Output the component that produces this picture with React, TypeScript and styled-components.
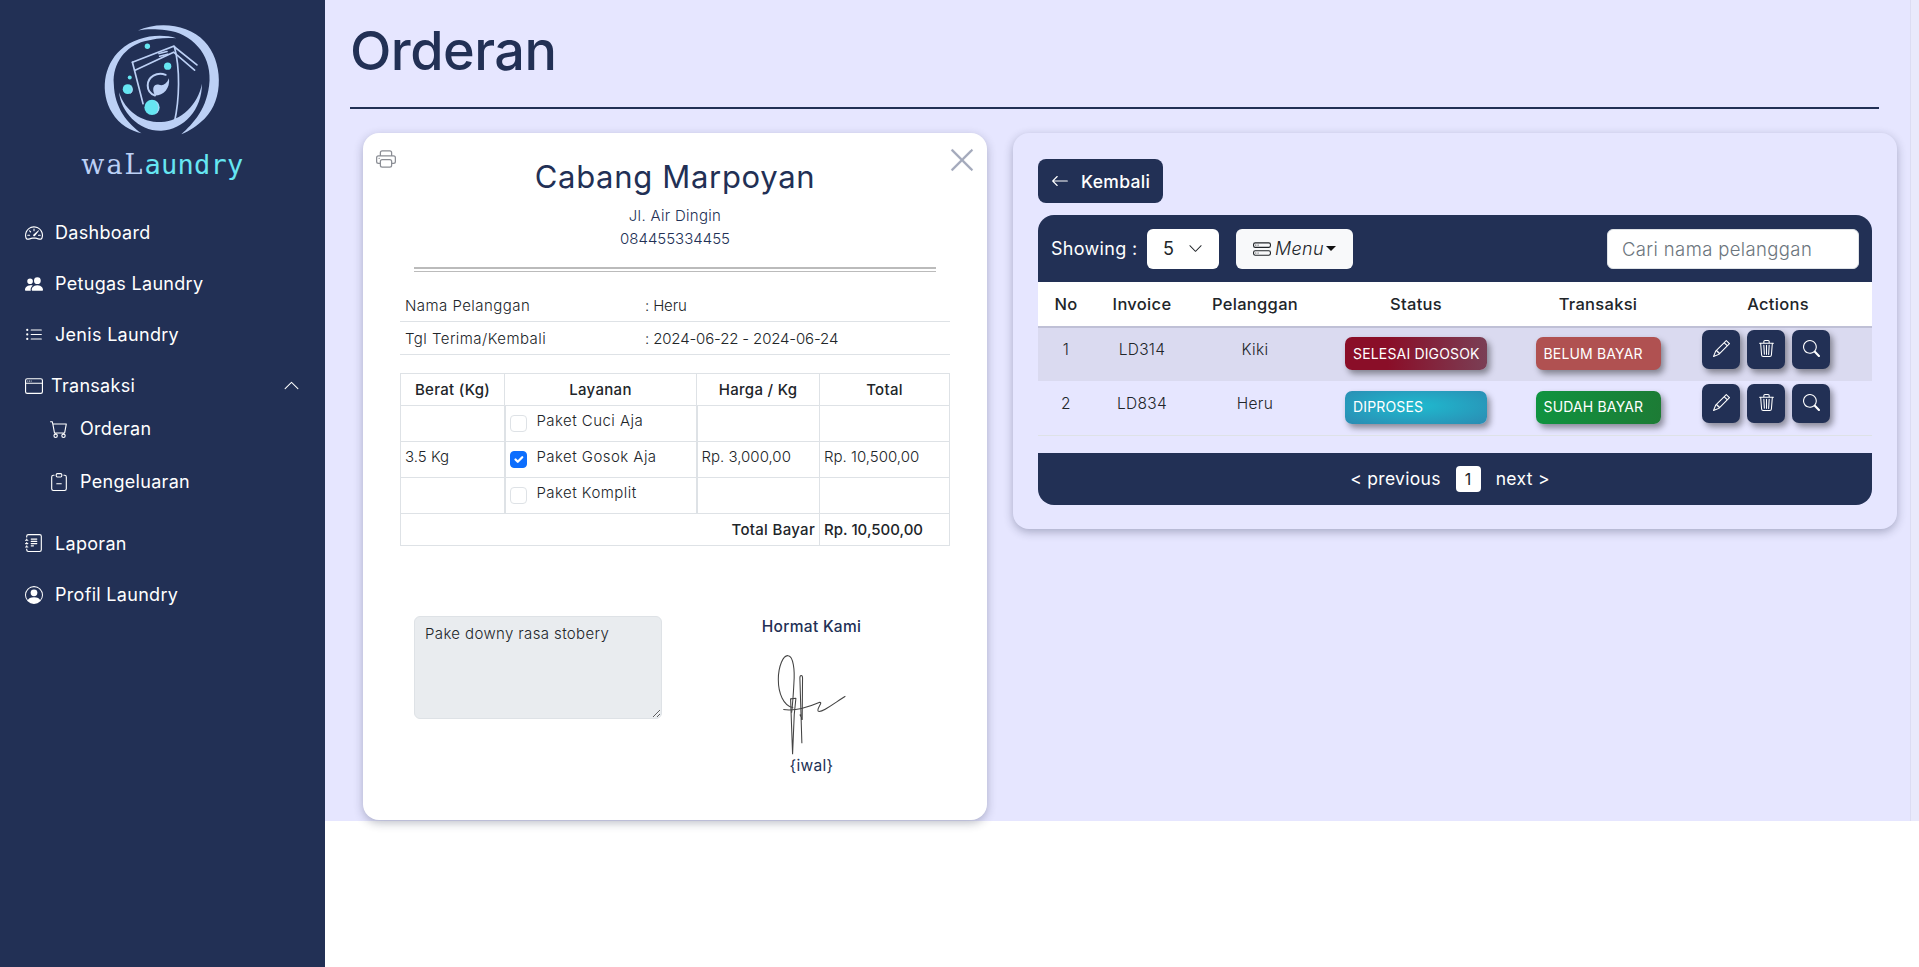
import React from "react";
import styled, { createGlobalStyle } from "styled-components";
import {
  BsArrowLeft,
  BsCart,
  BsChevronDown,
  BsChevronUp,
  BsClipboardMinus,
  BsHddStack,
  BsJournalText,
  BsListUl,
  BsPencil,
  BsPeopleFill,
  BsPersonCircle,
  BsPrinter,
  BsSearch,
  BsSpeedometer2,
  BsTrash3,
  BsWindow,
  BsXLg,
} from "react-icons/bs";

const navy = "#223055";

const GlobalStyle = createGlobalStyle`
  * { box-sizing: border-box; }
  html, body { margin: 0; padding: 0; height: 100%; overflow: hidden; background: #fff; }
  body {
    font-family: "Inter", "Noto Sans", sans-serif;
    font-size: 15px;
    letter-spacing: 0.02em;
    color: #212529;
  }
`;

const Page = styled.div`
  display: flex;
  height: 967px;
`;

const Sidebar = styled.aside`
  width: 325px;
  flex: none;
  background: ${navy};
  color: #fff;
`;

const Brand = styled.div`
  display: flex;
  flex-direction: column;
  align-items: center;
  padding-top: 9px;
  height: 207px;
`;

const BrandName = styled.div`
  margin-top: 5px;
  font-family: "DejaVu Sans Mono", monospace;
  font-size: 27px;
  line-height: 36px;
  letter-spacing: 0.01em;
  color: #66e6f2;
`;

const BrandPrefix = styled.span`
  font-family: "DejaVu Serif", serif;
  font-size: 27px;
  letter-spacing: 2px;
  color: #bcd0f5;
`;

const NavList = styled.nav`
  display: flex;
  flex-direction: column;
`;

const NavItem = styled.div<{ $sub?: boolean; $gap?: number; $height?: number }>`
  display: flex;
  align-items: center;
  gap: ${(p) => p.$gap ?? 12}px;
  height: ${(p) => p.$height ?? 51}px;
  padding-left: ${(p) => (p.$sub ? 50 : 25)}px;
  padding-right: 25px;
  font-size: 18px;
  white-space: nowrap;

  svg {
    flex: none;
    font-size: 18px;
  }
`;

const NavChevron = styled.span`
  margin-left: auto;
  display: flex;
  svg { font-size: 17px; }
`;

const Main = styled.main`
  flex: 1;
  height: 821px;
  background: #e6e6ff;
  display: flex;
  min-width: 0;
`;

const Content = styled.div`
  flex: 1;
  min-width: 0;
`;

const ScrollTrack = styled.div`
  width: 9px;
  flex: none;
  background: #e9e9fb;
  border-left: 1px solid #dcdcf2;
`;

const PageHeader = styled.header`
  margin: 0 31px 0 25px;
  height: 109px;
  border-bottom: 2px solid ${navy};
  display: flex;
  align-items: flex-start;
`;

const PageTitle = styled.h1`
  margin: 17px 0 0;
  font-size: 54px;
  line-height: 68px;
  font-weight: 500;
  letter-spacing: -0.01em;
  color: ${navy};
`;

const Columns = styled.div`
  display: flex;
  align-items: flex-start;
  gap: 26px;
  margin: 24px 0 0 38px;
`;

const ReceiptCard = styled.section`
  position: relative;
  width: 624px;
  height: 687px;
  flex: none;
  padding: 25px 37px 0;
  background: #fff;
  border-radius: 16px;
  box-shadow: 0 3px 10px rgba(34, 40, 70, 0.3);
  color: ${navy};
`;

const PrintButton = styled.span`
  position: absolute;
  left: 13px;
  top: 16px;
  display: flex;
  color: #8a8d94;
  font-size: 20px;
`;

const CloseButton = styled.span`
  position: absolute;
  right: 11px;
  top: 13px;
  display: flex;
  color: #a3a9bb;
  font-size: 28px;

  svg { stroke: currentColor; stroke-width: 0.5; }
`;

const ReceiptHead = styled.div`
  text-align: center;
`;

const BranchName = styled.h2`
  margin: 0 0 8px;
  font-size: 31px;
  line-height: 38px;
  font-weight: 400;
  letter-spacing: 0.022em;
`;

const BranchLine = styled.div<{ $numeric?: boolean }>`
  font-size: 15px;
  line-height: 23px;
  font-weight: 300;
  letter-spacing: ${(p) => (p.$numeric ? "0" : "0.02em")};
`;

const DoubleRule = styled.div`
  margin: 17px 14px 17px;
  height: 5px;
  border-top: 2px solid #bbb;
  border-bottom: 1px solid #bbb;
`;

const InfoRow = styled.div`
  display: grid;
  grid-template-columns: 240px 1fr;
  height: 33px;
  align-items: center;
  padding-left: 5px;
  border-bottom: 1px solid #dee2e6;
  font-size: 15px;
  font-weight: 300;
  letter-spacing: 0.03em;
  color: #212529;
`;

const InfoValue = styled.span`
  letter-spacing: -0.01em;
`;

const ServiceTable = styled.table`
  width: 549px;
  margin-top: 18px;
  border-collapse: collapse;
  table-layout: fixed;
  color: #212529;
`;

const HeadCell = styled.th<{ $w: number }>`
  width: ${(p) => p.$w}px;
  height: 32px;
  padding: 4px;
  border: 1px solid #dee2e6;
  font-size: 15px;
  line-height: 23px;
  font-weight: 500;
  text-align: center;
`;

const BodyCell = styled.td<{ $service?: boolean }>`
  height: 36px;
  padding: 3px 4px;
  border: 1px solid #dee2e6;
  ${(p) => (p.$service ? "border-left-width: 2px; border-right-width: 2px;" : "letter-spacing: 0;")}
  font-size: 15px;
  line-height: 24px;
  font-weight: 300;
  vertical-align: top;
`;

const TotalLabel = styled.td`
  height: 32px;
  padding: 3px 4px;
  border: 1px solid #dee2e6;
  font-size: 15px;
  line-height: 24px;
  font-weight: 500;
  text-align: right;
`;

const TotalValue = styled(TotalLabel)`
  text-align: left;
  letter-spacing: 0;
`;

const CheckLine = styled.label`
  display: flex;
  align-items: flex-start;
  gap: 10px;
  letter-spacing: 0.03em;
`;

const Check = styled.input`
  appearance: none;
  width: 17px;
  height: 17px;
  margin: 6px 0 0 0;
  flex: none;
  background: #fff;
  border: 1px solid #dee2e6;
  border-radius: 4px;

  &:checked {
    background: #0d6efd url("data:image/svg+xml,%3csvg xmlns='http://www.w3.org/2000/svg' viewBox='0 0 20 20'%3e%3cpath fill='none' stroke='%23fff' stroke-linecap='round' stroke-linejoin='round' stroke-width='3' d='m6 10 3 3 6-6'/%3e%3c/svg%3e") center / 100% no-repeat;
    border-color: #0d6efd;
  }
`;

const SignRow = styled.div`
  display: grid;
  grid-template-columns: 248px 1fr;
  column-gap: 11px;
  margin: 70px 0 0 14px;
`;

const NoteBox = styled.textarea`
  width: 248px;
  height: 103px;
  padding: 6px 10px;
  background: #e9ecef;
  border: 1px solid #dee2e6;
  border-radius: 6px;
  font: inherit;
  font-size: 15px;
  line-height: 22px;
  font-weight: 300;
  letter-spacing: 0.025em;
  color: #212529;
  outline: none;
`;

const SignColumn = styled.div`
  display: flex;
  flex-direction: column;
  align-items: center;
  padding-top: 1px;
  font-size: 15.5px;
  font-weight: 500;
  color: ${navy};
`;

const SignTitle = styled.div`
  line-height: 20px;
`;

const SignName = styled.div`
  line-height: 20px;
  font-weight: 400;
`;

const SignatureArt = styled.svg`
  width: 73px;
  height: 103px;
  margin: 16px 0 0;
`;

const ListCard = styled.section`
  width: 884px;
  flex: none;
  padding: 26px 25px 24px;
  background: #e6e6ff;
  border-radius: 16px;
  box-shadow: 0 3px 10px rgba(34, 40, 70, 0.32);
`;

const BackButton = styled.button`
  display: inline-flex;
  align-items: center;
  gap: 12px;
  height: 44px;
  padding: 0 13px;
  margin-bottom: 12px;
  background: ${navy};
  border: none;
  border-radius: 8px;
  color: #fff;
  font: inherit;
  font-size: 17.5px;
  font-weight: 500;
  letter-spacing: 0.02em;

  svg { font-size: 18px; }
`;

const Toolbar = styled.div`
  display: flex;
  align-items: center;
  height: 67px;
  padding: 0 13px;
  background: ${navy};
  border-radius: 16px 16px 0 0;
  color: #fff;
  font-size: 18px;
`;

const ShowingLabel = styled.span`
  width: 96px;
`;

const SelectBox = styled.div`
  width: 72px;
  height: 40px;
  display: flex;
  align-items: center;
  justify-content: space-between;
  padding: 0 16px;
  background: #fff;
  border-radius: 6px;
  color: #212529;
  font-size: 18px;
  svg { font-size: 15px; }
`;

const MenuButton = styled.div`
  width: 117px;
  height: 40px;
  margin-left: 17px;
  display: flex;
  align-items: center;
  justify-content: center;
  gap: 4px;
  background: #f8f9fa;
  border-radius: 6px;
  color: #212529;
  font-size: 18px;
  font-style: italic;
  font-weight: 300;

  svg { font-size: 18px; }

  &::after {
    content: "";
    margin-left: -2px;
    border-top: 5px solid #111;
    border-left: 5px solid transparent;
    border-right: 5px solid transparent;
  }
`;

const SearchInput = styled.input`
  width: 252px;
  height: 40px;
  margin-left: auto;
  padding: 0 14px;
  background: #fff;
  border: 1px solid #dee2e6;
  border-radius: 6px;
  font: inherit;
  font-size: 18.5px;
  font-weight: 300;
  letter-spacing: 0.02em;
  outline: none;

  &::placeholder { color: #6c757d; opacity: 1; }
`;

const OrderTable = styled.table`
  width: 834px;
  border-collapse: collapse;
  table-layout: fixed;
`;

const OrderHead = styled.th<{ $w: number }>`
  width: ${(p) => p.$w}px;
  height: 45px;
  padding: 0;
  background: #fff;
  border-bottom: 2px solid #bfc0d6;
  font-size: 16.5px;
  font-weight: 500;
  text-align: center;
  color: #212529;
`;

const OrderRow = styled.tr<{ $striped?: boolean }>`
  height: 54px;
  background: ${(p) => (p.$striped ? "#dadaf0" : "transparent")};
  border-bottom: 1px solid ${(p) => (p.$striped ? "transparent" : "#dee2e6")};
`;

const OrderCell = styled.td`
  padding: 10px 0 0;
  vertical-align: top;
  text-align: center;
  font-size: 15.5px;
  line-height: 24px;
  font-weight: 300;
  color: #212529;
`;

const chipBackgrounds = {
  done: "linear-gradient(90deg, #8a0e28 30%, #7a3f55)",
  process: "radial-gradient(ellipse at 50% 45%, #1fbacf, #2b8bb2)",
  unpaid: "#b05151",
  paid: "linear-gradient(100deg, #0f9440, #1d7b35)",
};

const Chip = styled.div<{ $kind: keyof typeof chipBackgrounds; $w: number }>`
  width: ${(p) => p.$w}px;
  height: 33px;
  margin: -1px auto 0;
  padding-left: 8px;
  display: flex;
  align-items: center;
  border-radius: 7px;
  background: ${(p) => chipBackgrounds[p.$kind]};
  box-shadow: 3px 4px 6px rgba(0, 0, 0, 0.4);
  color: #fff;
  font-size: 14px;
  font-weight: 400;
  letter-spacing: 0.012em;
  white-space: nowrap;
`;

const ActionCell = styled.td`
  padding: 2px 0 0 18px;
  vertical-align: top;
`;

const ActionGroup = styled.div`
  display: flex;
  gap: 7px;
`;

const ActionButton = styled.button`
  width: 38px;
  height: 39px;
  padding: 0 0 2px;
  display: flex;
  align-items: center;
  justify-content: center;
  background: ${navy};
  border: none;
  border-radius: 7px;
  box-shadow: 3px 4px 6px rgba(0, 0, 0, 0.4);
  color: #fff;
  font-size: 17px;
`;

const Pager = styled.div`
  display: flex;
  align-items: center;
  justify-content: center;
  gap: 15px;
  height: 52px;
  margin-top: 17px;
  padding-right: 10px;
  background: ${navy};
  border-radius: 0 0 16px 16px;
  color: #fff;
  font-size: 17.5px;
  font-weight: 400;
`;

const PageNumber = styled.span`
  width: 25px;
  height: 26px;
  display: flex;
  align-items: center;
  justify-content: center;
  background: #fff;
  border-radius: 4px;
  color: #212529;
  font-size: 16px;
`;

const NAV_TOP = [
  { label: "Dashboard", icon: <BsSpeedometer2 /> },
  { label: "Petugas Laundry", icon: <BsPeopleFill /> },
  { label: "Jenis Laundry", icon: <BsListUl /> },
];

const SERVICES = [
  { name: "Paket Cuci Aja", checked: false },
  { name: "Paket Gosok Aja", checked: true, weight: "3.5 Kg", price: "Rp. 3,000,00", total: "Rp. 10,500,00" },
  { name: "Paket Komplit", checked: false },
];

const ORDERS = [
  {
    no: 1,
    invoice: "LD314",
    customer: "Kiki",
    status: "SELESAI DIGOSOK",
    statusKind: "done" as const,
    payment: "BELUM BAYAR",
    paymentKind: "unpaid" as const,
  },
  {
    no: 2,
    invoice: "LD834",
    customer: "Heru",
    status: "DIPROSES",
    statusKind: "process" as const,
    payment: "SUDAH BAYAR",
    paymentKind: "paid" as const,
  },
];

function LaundryLogo() {
  return (
    <svg width="170" height="133" viewBox="-5 0 510 400" aria-hidden="true">
      <g fill="#bcd0f5">
        <path d="M175 65C230 38 325 42 375 98C430 155 435 272 375 330C352 352 330 366 305 377C340 345 385 300 390 215C394 135 335 72 260 64C225 60 200 60 175 65Z" />
        <path d="M290 88C240 72 168 82 122 123C70 170 60 252 97 312C118 348 155 367 185 374C145 345 104 300 102 225C98 162 138 112 194 97C227 88 260 85 290 88Z" />
        <path d="M118 250C122 308 178 368 245 366C312 364 368 302 367 225C356 286 305 338 245 340C187 341 136 308 118 250Z" />
        <path d="M226 260C252 260 272 238 268 208C260 226 250 232 238 228C224 224 214 238 226 260Z" />
      </g>
      <g fill="none" stroke="#bcd0f5" strokeLinecap="round">
        <g strokeWidth="5">
          <path d="M158 160L282 112L352 168" />
          <path d="M166 184L282 130L345 184" />
          <path d="M158 160L190 285" />
          <path d="M284 112C302 180 300 270 284 342" />
          <path d="M238 134L262 128M240 142L264 136" />
        </g>
        <path d="M258 198C232 188 204 204 204 230C204 246 214 256 226 260" strokeWidth="6" />
      </g>
      <g fill="#66e6f2">
        <circle cx="203" cy="112" r="8" />
        <circle cx="264" cy="172" r="11" />
        <circle cx="150" cy="206" r="6" />
        <circle cx="144" cy="241" r="15" />
        <circle cx="217" cy="296" r="23" />
      </g>
      <g fill="none" stroke="#bcd0f5" strokeWidth="3">
        <path d="M152 232C160 240 158 250 152 254" />
        <path d="M228 278C240 288 238 306 230 314" />
      </g>
    </svg>
  );
}

function Signature() {
  return (
    <SignatureArt viewBox="75 40 220 310" aria-hidden="true">
      <g fill="none" stroke="#444" strokeWidth="3.2" strokeLinejoin="round">
        <path d="M130 205C100 200 85 160 85 120C85 80 100 45 115 48C130 50 135 90 132 130C130 170 128 195 125 220" />
        <path d="M128 345L122 178L138 176L133 225L128 345" />
        <path d="M156 312L150 115C150 105 158 105 158 115L157 240L150 225" />
        <path d="M100 210C130 215 170 205 210 188C220 190 200 205 205 215C215 222 255 190 287 170" />
      </g>
    </SignatureArt>
  );
}

export default function App() {
  return (
    <Page>
      <GlobalStyle />
      <Sidebar>
        <Brand>
          <LaundryLogo />
          <BrandName>
            <BrandPrefix>waL</BrandPrefix>aundry
          </BrandName>
        </Brand>
        <NavList>
          {NAV_TOP.map((item) => (
            <NavItem key={item.label}>
              {item.icon}
              {item.label}
            </NavItem>
          ))}
          <NavItem $gap={8}>
            <BsWindow />
            Transaksi
            <NavChevron>
              <BsChevronUp />
            </NavChevron>
          </NavItem>
          <NavItem $sub $height={35} $gap={12}>
            <BsCart />
            Orderan
          </NavItem>
          <NavItem $sub $height={71} $gap={12}>
            <BsClipboardMinus />
            Pengeluaran
          </NavItem>
          <NavItem $height={52}>
            <BsJournalText />
            Laporan
          </NavItem>
          <NavItem>
            <BsPersonCircle />
            Profil Laundry
          </NavItem>
        </NavList>
      </Sidebar>

      <Main>
        <Content>
          <PageHeader>
            <PageTitle>Orderan</PageTitle>
          </PageHeader>
          <Columns>
            <ReceiptCard>
              <PrintButton>
                <BsPrinter />
              </PrintButton>
              <CloseButton>
                <BsXLg />
              </CloseButton>
              <ReceiptHead>
                <BranchName>Cabang Marpoyan</BranchName>
                <BranchLine>Jl. Air Dingin</BranchLine>
                <BranchLine $numeric>084455334455</BranchLine>
              </ReceiptHead>
              <DoubleRule />
              <InfoRow>
                <span>Nama Pelanggan</span>
                <InfoValue>: Heru</InfoValue>
              </InfoRow>
              <InfoRow>
                <span>Tgl Terima/Kembali</span>
                <InfoValue>: 2024-06-22 - 2024-06-24</InfoValue>
              </InfoRow>
              <ServiceTable>
                <thead>
                  <tr>
                    <HeadCell $w={104}>Berat (Kg)</HeadCell>
                    <HeadCell $w={192}>Layanan</HeadCell>
                    <HeadCell $w={123}>Harga / Kg</HeadCell>
                    <HeadCell $w={130}>Total</HeadCell>
                  </tr>
                </thead>
                <tbody>
                  {SERVICES.map((s) => (
                    <tr key={s.name}>
                      <BodyCell>{s.weight}</BodyCell>
                      <BodyCell $service>
                        <CheckLine>
                          <Check type="checkbox" checked={s.checked} readOnly />
                          {s.name}
                        </CheckLine>
                      </BodyCell>
                      <BodyCell>{s.price}</BodyCell>
                      <BodyCell>{s.total}</BodyCell>
                    </tr>
                  ))}
                  <tr>
                    <TotalLabel colSpan={3}>Total Bayar</TotalLabel>
                    <TotalValue>Rp. 10,500,00</TotalValue>
                  </tr>
                </tbody>
              </ServiceTable>
              <SignRow>
                <NoteBox readOnly value="Pake downy rasa stobery" />
                <SignColumn>
                  <SignTitle>Hormat Kami</SignTitle>
                  <Signature />
                  <SignName>{"{iwal}"}</SignName>
                </SignColumn>
              </SignRow>
            </ReceiptCard>

            <ListCard>
              <BackButton>
                <BsArrowLeft />
                Kembali
              </BackButton>
              <Toolbar>
                <ShowingLabel>Showing :</ShowingLabel>
                <SelectBox>
                  5
                  <BsChevronDown />
                </SelectBox>
                <MenuButton>
                  <BsHddStack />
                  Menu
                </MenuButton>
                <SearchInput placeholder="Cari nama pelanggan" />
              </Toolbar>
              <OrderTable>
                <thead>
                  <tr>
                    <OrderHead $w={56}>No</OrderHead>
                    <OrderHead $w={96}>Invoice</OrderHead>
                    <OrderHead $w={130}>Pelanggan</OrderHead>
                    <OrderHead $w={192}>Status</OrderHead>
                    <OrderHead $w={172}>Transaksi</OrderHead>
                    <OrderHead $w={188}>Actions</OrderHead>
                  </tr>
                </thead>
                <tbody>
                  {ORDERS.map((o, i) => (
                    <OrderRow key={o.invoice} $striped={i === 0}>
                      <OrderCell>{o.no}</OrderCell>
                      <OrderCell>{o.invoice}</OrderCell>
                      <OrderCell>{o.customer}</OrderCell>
                      <OrderCell>
                        <Chip $kind={o.statusKind} $w={142}>
                          {o.status}
                        </Chip>
                      </OrderCell>
                      <OrderCell>
                        <Chip $kind={o.paymentKind} $w={125}>
                          {o.payment}
                        </Chip>
                      </OrderCell>
                      <ActionCell>
                        <ActionGroup>
                          <ActionButton aria-label="Edit">
                            <BsPencil />
                          </ActionButton>
                          <ActionButton aria-label="Hapus">
                            <BsTrash3 />
                          </ActionButton>
                          <ActionButton aria-label="Detail">
                            <BsSearch />
                          </ActionButton>
                        </ActionGroup>
                      </ActionCell>
                    </OrderRow>
                  ))}
                </tbody>
              </OrderTable>
              <Pager>
                <span>&lt; previous</span>
                <PageNumber>1</PageNumber>
                <span>next &gt;</span>
              </Pager>
            </ListCard>
          </Columns>
        </Content>
        <ScrollTrack />
      </Main>
    </Page>
  );
}
